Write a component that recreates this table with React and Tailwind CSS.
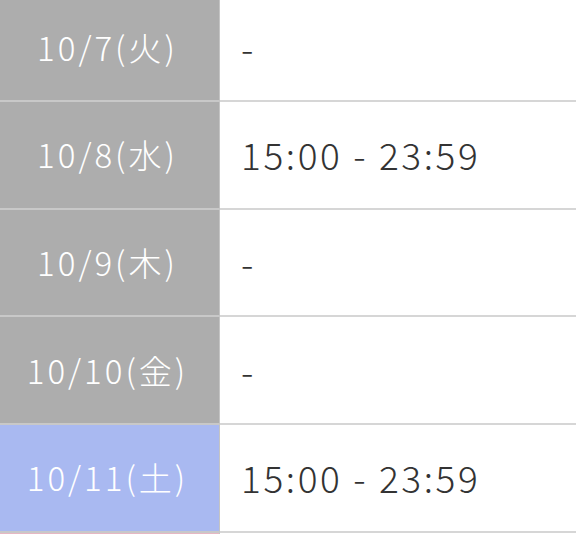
import React from 'react'

const rows = [
  { date: '10/7(火)', time: '-', tone: 'gray' },
  { date: '10/8(水)', time: '15:00 - 23:59', tone: 'gray' },
  { date: '10/9(木)', time: '-', tone: 'gray' },
  { date: '10/10(金)', time: '-', tone: 'gray' },
  { date: '10/11(土)', time: '15:00 - 23:59', tone: 'blue' },
]

const toneClass = {
  gray: 'bg-[#adadad]',
  blue: 'bg-[#a9b9f1]',
}

const App = () => {
  return (
    <div
      className="w-[576px] h-[534px] overflow-hidden bg-white"
      style={{ fontFamily: '"Noto Sans CJK JP", "Noto Sans", sans-serif' }}
    >
      <div className="mt-[-5.7px] flex flex-col">
        {rows.map((row) => (
          <div key={row.date} className="flex h-[107.7px] shrink-0">
            <div
              className={`w-[220px] shrink-0 flex items-center justify-center pr-[4px] border-b-2 border-r border-b-[#c8c8c8] border-r-[#c4c4c4] ${toneClass[row.tone]}`}
            >
              <span className="text-white text-[33px] font-light tracking-[3px] leading-none">{row.date}</span>
            </div>
            <div className="flex-1 flex items-center pl-[21px] border-b-2 border-[#d6d6d6]">
              <span className="text-[#333333] text-[37px] font-light tracking-[2.6px] leading-none">{row.time}</span>
            </div>
          </div>
        ))}
        {/* next day, only its top edge shows */}
        <div className="flex h-[20px] shrink-0">
          <div className="w-[220px] shrink-0 bg-[#e6b7c4] border-r border-[#c4c4c4]" />
          <div className="flex-1" />
        </div>
      </div>
    </div>
  )
}

export default App
